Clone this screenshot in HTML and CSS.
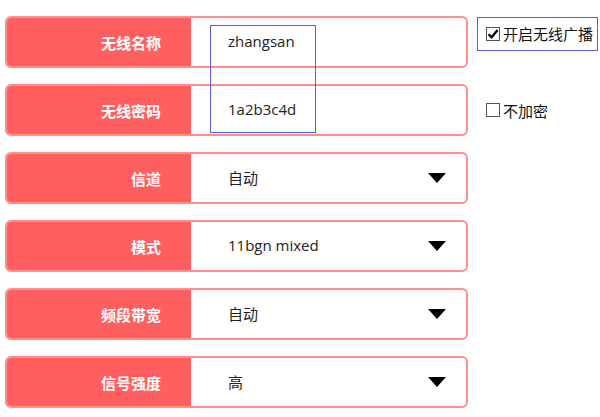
FILE: index.html
```html
<!DOCTYPE html>
<html lang="zh-CN">
<head>
  <meta charset="UTF-8" />
  <title>无线设置</title>
  <link rel="stylesheet" href="styles.css">
</head>
<body>

  <div class="form">
    <!-- 框出名称和密码的提示框 -->
    <div class="highlight"></div>

    <div class="row">
      <div class="field">
        <div class="label">无线名称</div>
        <div class="value">zhangsan</div>
      </div>
      <div class="side side-boxed">
        <span class="check checked">
          <svg width="12" height="12" viewBox="0 0 12 12"><path d="M1.5 6.2 L4.6 9.3 L10.6 2" fill="none" stroke="#000" stroke-width="2.2"/></svg>
        </span>
        开启无线广播
      </div>
    </div>

    <div class="row">
      <div class="field">
        <div class="label">无线密码</div>
        <div class="value">1a2b3c4d</div>
      </div>
      <div class="side">
        <span class="check"></span>
        不加密
      </div>
    </div>

    <div class="row">
      <div class="field">
        <div class="label">信道</div>
        <div class="value">自动</div>
        <span class="arrow"></span>
      </div>
    </div>

    <div class="row">
      <div class="field">
        <div class="label">模式</div>
        <div class="value">11bgn mixed</div>
        <span class="arrow"></span>
      </div>
    </div>

    <div class="row">
      <div class="field">
        <div class="label">频段带宽</div>
        <div class="value">自动</div>
        <span class="arrow"></span>
      </div>
    </div>

    <div class="row">
      <div class="field">
        <div class="label">信号强度</div>
        <div class="value">高</div>
        <span class="arrow"></span>
      </div>
    </div>
  </div>

</body>
</html>
```

FILE: styles.css
```css
body {
  margin: 0;
  background: #ffffff;
  font-family: "Open Sans", "Noto Sans CJK SC", sans-serif;
  color: #222;
}

.form {
  position: relative;
  padding: 16px 0 0 5px;
  display: flex;
  flex-direction: column;
  gap: 16px;
}

.row {
  display: flex;
  align-items: center;
  gap: 9px;
}

.field {
  width: 463px;
  height: 52px;
  box-sizing: border-box;
  border: 2px solid #ff8e8e;
  border-radius: 6px;
  display: flex;
  align-items: center;
  overflow: hidden;
}

.label {
  width: 184px;
  height: 100%;
  background-color: #ff5f5f;
  color: #fff;
  font-weight: bold;
  font-size: 15px;
  display: flex;
  align-items: center;
  justify-content: flex-end;
  padding-right: 30px;
  box-sizing: border-box;
}

.value {
  flex: 1;
  padding-left: 37px;
  font-size: 15px;
  color: #222;
  margin-top: -2px;
}

.arrow {
  width: 0;
  height: 0;
  border-left: 9.5px solid transparent;
  border-right: 9.5px solid transparent;
  border-top: 10px solid #000;
  margin-right: 20px;
}

.side {
  display: flex;
  align-items: center;
  font-size: 15px;
  color: #111;
  padding-left: 9px;
}

.side-boxed {
  border: 1.5px solid #5c5cd6;
  height: 34px;
  width: 121px;
  box-sizing: border-box;
  margin-top: -17px;
  padding-left: 8px;
  white-space: nowrap;
}

.check {
  width: 14px;
  height: 14px;
  box-sizing: border-box;
  border: 1px solid #555;
  background: #fff;
  margin-right: 3px;
  display: inline-flex;
  align-items: center;
  justify-content: center;
  flex-shrink: 0;
}

.highlight {
  position: absolute;
  left: 210px;
  top: 25px;
  width: 106px;
  height: 108px;
  box-sizing: border-box;
  border: 1.5px solid #5c5cd6;
  pointer-events: none;
}
```
